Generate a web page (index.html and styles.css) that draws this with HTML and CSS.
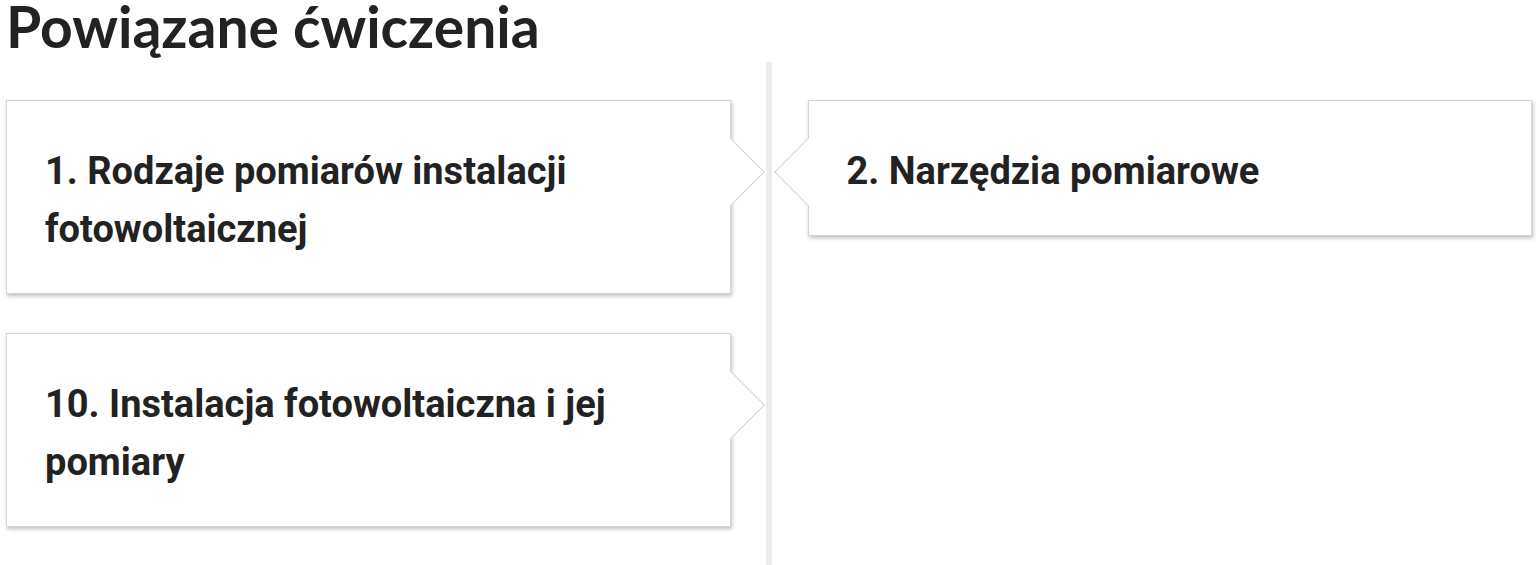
FILE: index.html
```html
<!DOCTYPE html>
<html lang="pl">
<head>
  <meta charset="UTF-8" />
  <meta name="viewport" content="width=device-width, initial-scale=1.0" />
  <title>Powiązane ćwiczenia</title>
  <link rel="stylesheet" href="styles.css">
</head>

<body>
  <div class="page">
    <h2 class="related-title">Powiązane ćwiczenia</h2>

    <!-- timeline z ćwiczeniami -->
    <div class="timeline">
      <a class="card card-left" href="#">1. Rodzaje pomiarów instalacji fotowoltaicznej</a>
      <a class="card card-right" href="#">2. Narzędzia pomiarowe</a>
      <a class="card card-left" href="#">10. Instalacja fotowoltaiczna i jej pomiary</a>
    </div>
  </div>
</body>
</html>
```

FILE: styles.css
```css
body {
  margin: 0;
  background: #fff;
  color: #222;
}

.page {
  padding: 0 8px 0 6px;
}

.related-title {
  font-family: Lato, "Open Sans", sans-serif;
  font-weight: 700;
  font-size: 57px;
  line-height: 52px;
  margin: 0 0 10px 0;
  color: #222;
}

/* linia na środku */
.timeline {
  display: grid;
  grid-template-columns: 1fr 1fr;
  column-gap: 77px;
  row-gap: 39px;
  align-items: start;
  padding: 38px 0 40px 0;
  background: linear-gradient(#ececec, #ececec) center / 6px 100% no-repeat;
}

.card {
  position: relative;
  display: block;
  padding: 41px 38px 35px 38px;
  background: #fff;
  border: 1px solid #d4d4d4;
  box-shadow: 1px 2px 4px rgba(0, 0, 0, 0.25);
  font-family: Roboto, "Liberation Sans", sans-serif;
  font-weight: 700;
  font-size: 38px;
  line-height: 58px;
  color: #222;
  text-decoration: none;
}

.card-left {
  grid-column: 1;
}

.card-right {
  grid-column: 2;
  grid-row: 1;
}

/* strzałka w stronę linii */
.card::after {
  content: "";
  position: absolute;
  top: 47px;
  width: 48px;
  height: 48px;
  box-sizing: border-box;
  background: #fff;
  transform: rotate(45deg);
}

.card-left::after {
  right: -25px;
  border-top: 1px solid #d4d4d4;
  border-right: 1px solid #d4d4d4;
}

.card-right::after {
  left: -25px;
  border-bottom: 1px solid #d4d4d4;
  border-left: 1px solid #d4d4d4;
}
```
